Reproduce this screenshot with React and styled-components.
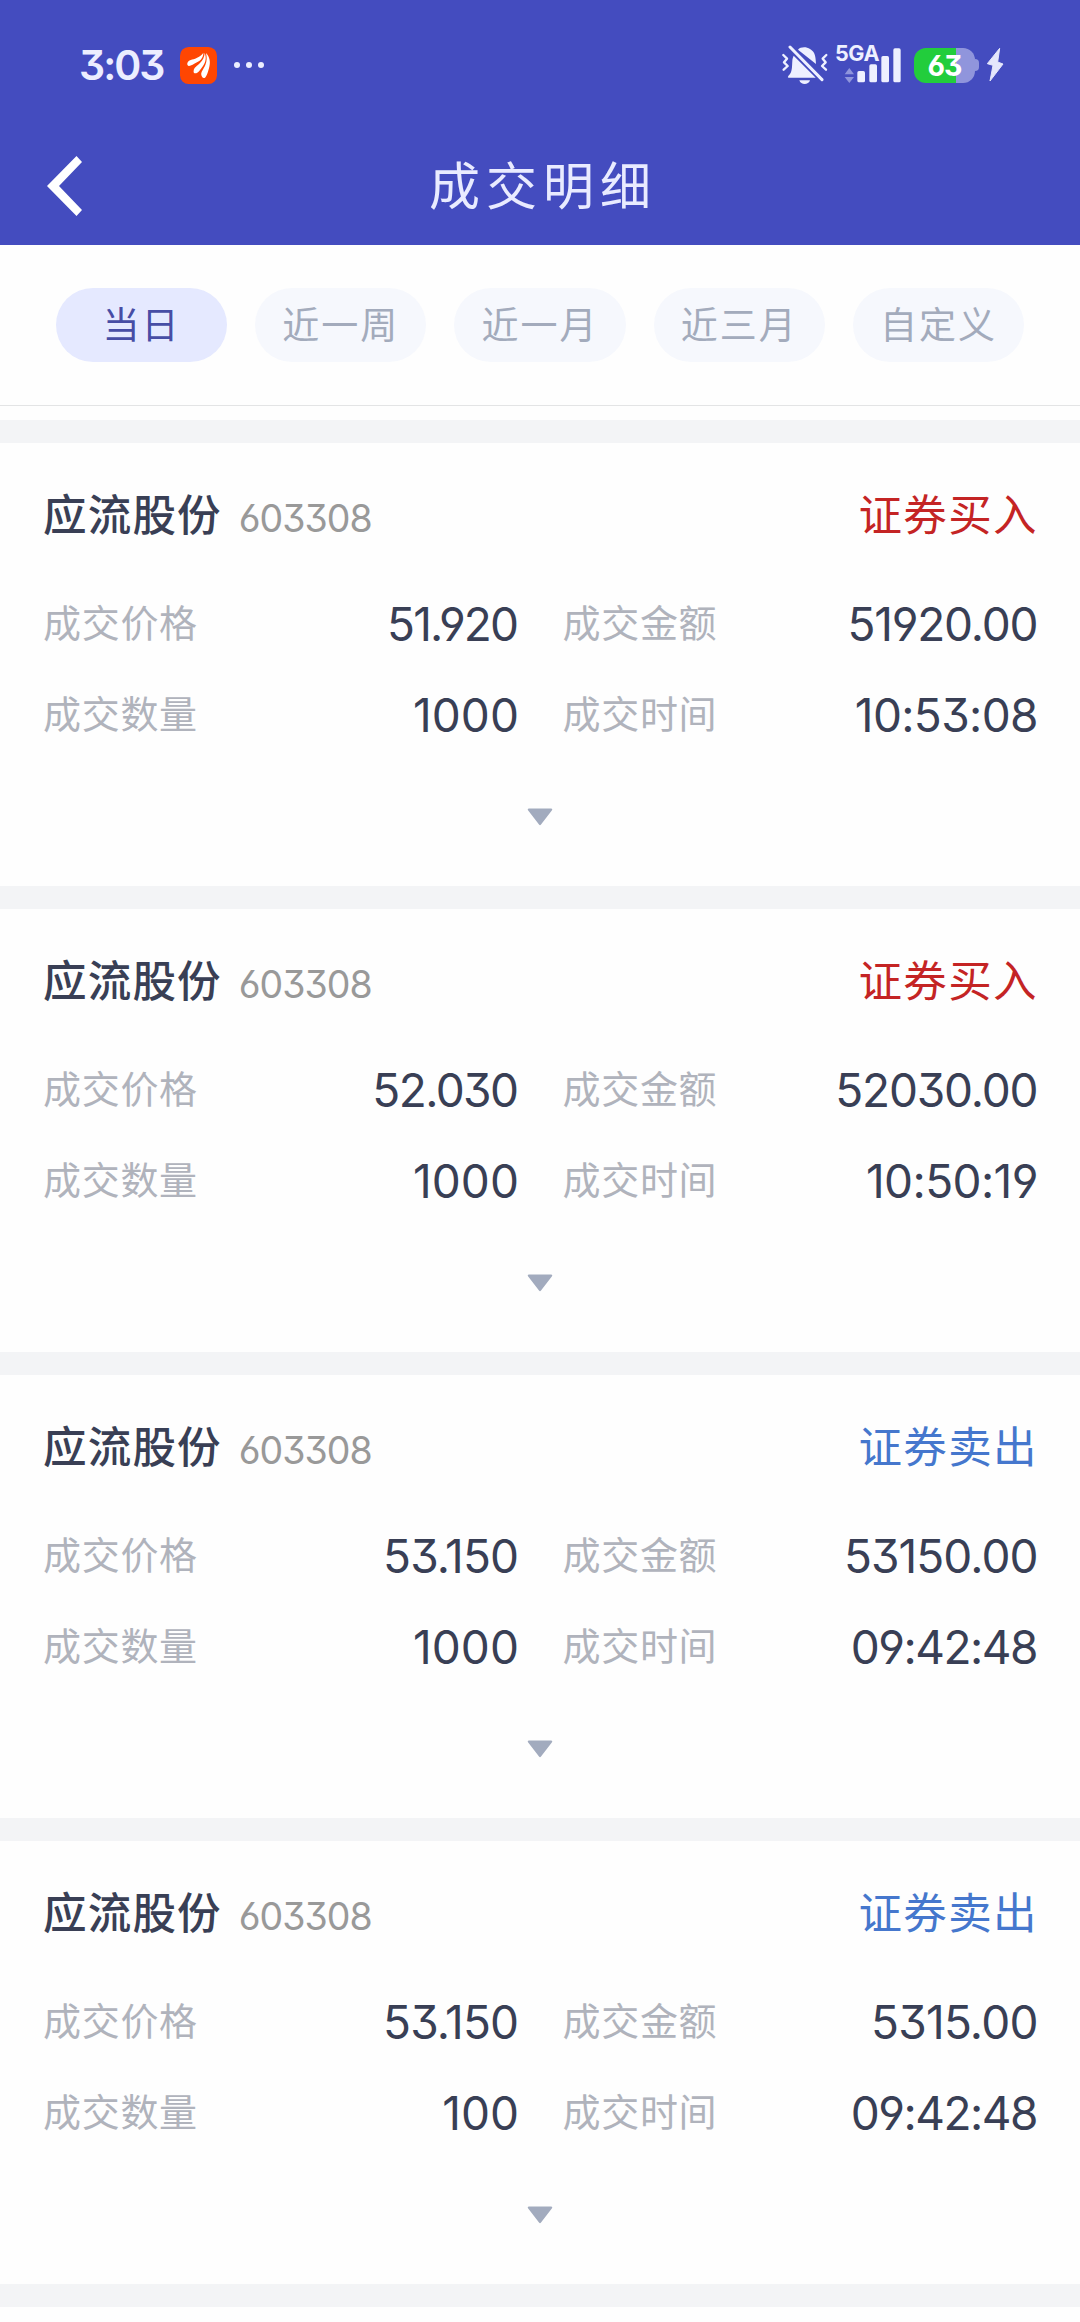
import styled, { createGlobalStyle } from "styled-components";
import { useState } from "react";

const filtros = ["当日", "近一周", "近一月", "近三月", "自定义"];

const operaciones = [
  { id: 1, tipo: "buy", precio: "51.920", importe: "51920.00", cantidad: "1000", hora: "10:53:08" },
  { id: 2, tipo: "buy", precio: "52.030", importe: "52030.00", cantidad: "1000", hora: "10:50:19" },
  { id: 3, tipo: "sell", precio: "53.150", importe: "53150.00", cantidad: "1000", hora: "09:42:48" },
  { id: 4, tipo: "sell", precio: "53.150", importe: "5315.00", cantidad: "100", hora: "09:42:48" },
];

const espaciado = {
  "51.920": -1.9,
  "52.030": -1.6,
  "53.150": -0.9,
  "51920.00": -1.2,
  "52030.00": -1.2,
  "53150.00": -0.95,
  "5315.00": -0.75,
  "1000": 0.1,
  "100": 0,
  "10:53:08": -0.65,
  "10:50:19": -0.6,
};

function AppLogo() {
  return (
    <svg width="37" height="37" viewBox="0 0 111 111">
      <rect width="111" height="111" rx="26" fill="#ff4602" />
      <g fill="#fff">
        <path d="M22 49C24 38 38 39 50 33C61 28 66 23 70 17C70 31 63 40 51 46C41 51 34 57 27 57C23 57 21 53 22 49Z" />
        <path d="M41 71C42 62 52 56 60 48C69 39 73 30 74 18C80 32 77 46 69 57C62 67 54 79 46 79C42 79 40 76 41 71Z" />
        <path d="M64 84C62 75 71 66 76 54C81 42 81 31 78 18C89 30 92 44 88 59C85 72 79 92 73 93C68 94 65 89 64 84Z" />
      </g>
    </svg>
  );
}

function MutedBell() {
  return (
    <svg width="46" height="40" viewBox="35 41 138 120">
      <g fill="#eef0ff">
        <path d="M83 55C90 47 107 45 119 53C131 60 135 70 136 85L137 98Z" />
        <path d="M70 73L136 139H55C50 139 54 133 59 128C66 119 65 101 66 89C66 83 68 78 70 73Z" />
        <path d="M87 147H119C115 162 91 162 87 147Z" />
      </g>
      <g fill="none" stroke="#eef0ff" strokeLinecap="round" strokeLinejoin="round">
        <path d="M59 47L155 145" strokeWidth="9" />
        <path d="M39 71L50 82L41 93L52 104L40 115" strokeWidth="7" />
        <path d="M168 71L157 82L166 93L155 104L167 115" strokeWidth="7" />
      </g>
    </svg>
  );
}

function SignalBars() {
  return (
    <svg width="57" height="35" viewBox="220 53 171 105">
      <g fill="#8f95dc">
        <path d="M236 113L250 132H222Z" />
        <path d="M222 140H250L236 158Z" />
      </g>
      <g fill="#eef0ff">
        <rect x="260" y="122" width="23" height="34" rx="5" />
        <rect x="296" y="102" width="23" height="54" rx="5" />
        <rect x="332" y="77" width="23" height="79" rx="5" />
        <rect x="368" y="54" width="22" height="102" rx="5" />
      </g>
    </svg>
  );
}

function Bolt() {
  return (
    <svg width="17" height="34" viewBox="650 57 51 102">
      <path d="M688 58L651 104L668 109L659 156L698 105L682 99Z" fill="#e4e6fb" stroke="#e4e6fb" strokeWidth="3" strokeLinejoin="round" />
    </svg>
  );
}

function Campo({ label, value }) {
  return (
    <Field>
      <Label>{label}</Label>
      <Value $espacio={espaciado[value] ?? -1.5}>{value}</Value>
    </Field>
  );
}

function Operacion({ data }) {
  return (
    <Card>
      <CardHead>
        <Name>应流股份</Name>
        <Code>603308</Code>
        <Side $tipo={data.tipo}>{data.tipo === "buy" ? "证券买入" : "证券卖出"}</Side>
      </CardHead>
      <Fields>
        <Campo label="成交价格" value={data.precio} />
        <Campo label="成交金额" value={data.importe} />
        <Campo label="成交数量" value={data.cantidad} />
        <Campo label="成交时间" value={data.hora} />
      </Fields>
      <Expand>
        <svg width="26" height="18" viewBox="0 0 26 18">
          <path d="M2 0.5H24Q26 0.5 24.8 2.5L14 16.5Q13 17.8 12 16.5L1.2 2.5Q0 0.5 2 0.5Z" fill="#a2abbe" />
        </svg>
      </Expand>
    </Card>
  );
}

export default function App() {
  const [filtro, setFiltro] = useState("当日");

  return (
    <Container>
      <GlobalStyle />
      <Header>
        <StatusBar>
          <Clock>3:03</Clock>
          <AppLogo />
          <Dots>
            <i />
            <i />
            <i />
          </Dots>
          <StatusIcons>
            <MutedBell />
            <Signal>
              <Network>5GA</Network>
              <SignalBars />
            </Signal>
            <Battery>
              <BatteryBody>63</BatteryBody>
              <BatteryTip />
            </Battery>
            <Bolt />
          </StatusIcons>
        </StatusBar>
        <NavBar>
          <BackButton>
            <svg width="36" height="60" viewBox="0 0 36 60">
              <path d="M29.5 0L35 6L12 30L35 54L29.5 60L0 30Z" fill="#fff" />
            </svg>
          </BackButton>
          <Title>成交明细</Title>
        </NavBar>
      </Header>
      <Tabs>
        {filtros.map((item) => (
          <Tab key={item} $activo={item === filtro} onClick={() => setFiltro(item)}>
            {item}
          </Tab>
        ))}
      </Tabs>
      <List>
        {operaciones.map((item) => (
          <Operacion key={item.id} data={item} />
        ))}
      </List>
    </Container>
  );
}

const GlobalStyle = createGlobalStyle`
  * {
    box-sizing: border-box;
  }
  body {
    margin: 0;
    background: #fefefe;
    font-family: Inter, "Noto Sans CJK SC", sans-serif;
    /* open six and nine, flat-top three */
    font-feature-settings: "cv03", "cv04", "cv09";
  }
  svg {
    display: block;
    flex: none;
  }
`;
const Container = styled.div`
  width: 1080px;
  height: 2322px;
  overflow: hidden;
  background: #fefefe;
`;
const Header = styled.header`
  height: 245px;
  background: #444cbf;
`;
const StatusBar = styled.div`
  height: 130px;
  padding: 0 76px 0 79px;
  display: flex;
  align-items: center;
`;
const Clock = styled.span`
  width: 101px;
  font-size: 41px;
  font-weight: 600;
  line-height: 50px;
  letter-spacing: -2px;
  color: #eceeff;
`;
const Dots = styled.div`
  display: flex;
  gap: 6px;
  margin-left: 17px;

  i {
    width: 6px;
    height: 6px;
    border-radius: 50%;
    background: #eceeff;
  }
`;
const StatusIcons = styled.div`
  display: flex;
  align-items: center;
  margin-left: auto;
  gap: 7px;
`;
const Signal = styled.div`
  position: relative;
  width: 66px;
  display: flex;
  justify-content: flex-end;
`;
const Network = styled.span`
  position: absolute;
  left: 0;
  top: -7px;
  font-size: 21.5px;
  font-weight: 700;
  line-height: 24px;
  letter-spacing: -0.4px;
  color: #eef0ff;
`;
const Battery = styled.div`
  display: flex;
  align-items: center;
  margin-left: 6px;
  margin-right: 1px;
`;
const BatteryBody = styled.div`
  width: 61px;
  height: 35px;
  border-radius: 12px;
  background: linear-gradient(90deg, #22cd3c 42px, #9095dc 42px);
  color: #fff;
  font-size: 28.5px;
  font-weight: 700;
  line-height: 35px;
  letter-spacing: -1px;
  text-align: center;
`;
const BatteryTip = styled.div`
  width: 4px;
  height: 12px;
  border-radius: 0 4px 4px 0;
  background: #9095dc;
`;
const NavBar = styled.div`
  height: 112px;
  padding: 0 47px;
  display: grid;
  grid-template-columns: 36px 1fr 36px;
  align-items: center;
`;
const BackButton = styled.button`
  padding: 0;
  border: 0;
  background: none;
`;
const Title = styled.h1`
  margin: 0;
  padding: 1px 0 0 6px;
  font-size: 51px;
  font-weight: 400;
  line-height: 76px;
  letter-spacing: 6px;
  text-align: center;
  color: #e9ebff;
`;
const Tabs = styled.nav`
  height: 161px;
  padding: 43px 56px 0;
  display: grid;
  grid-template-columns: repeat(5, 1fr);
  gap: 28px;
  border-bottom: 1px solid #e3e4e5;
`;
const Tab = styled.button`
  height: 74px;
  padding: 2px 0 0;
  border: 0;
  border-radius: 37px;
  font-family: inherit;
  font-size: 37px;
  line-height: 72px;
  letter-spacing: 2px;
  white-space: nowrap;
  background: ${({ $activo }) => ($activo ? "#e5e9ff" : "#f6f8fd")};
  color: ${({ $activo }) => ($activo ? "#474da5" : "#a3abbc")};
`;
const List = styled.main`
  margin-top: 14px;
  border-bottom: 23px solid #f3f4f6;
`;
const Card = styled.section`
  height: 466px;
  padding: 9px 43px 0;
  border-top: 23px solid #f3f4f6;
`;
const CardHead = styled.div`
  height: 126px;
  display: flex;
  align-items: center;
`;
const Name = styled.span`
  margin-bottom: 6px;
  font-size: 43.5px;
  font-weight: 500;
  letter-spacing: 1.2px;
  color: #393f55;
`;
const Code = styled.span`
  margin: 6px 0 0 17px;
  font-size: 37.5px;
  letter-spacing: -1px;
  color: #999;
`;
const Side = styled.span`
  margin: 0 -1px 6px auto;
  font-size: 43.5px;
  letter-spacing: 1.4px;
  color: ${({ $tipo }) => ($tipo === "buy" ? "#c42424" : "#4577cd")};
`;
const Fields = styled.div`
  display: grid;
  grid-template-columns: 1fr 1fr;
  column-gap: 45px;
`;
const Field = styled.div`
  height: 91px;
  display: flex;
  align-items: center;
  justify-content: space-between;
`;
const Label = styled.span`
  margin-bottom: 6px;
  font-size: 38px;
  letter-spacing: 0.7px;
  color: #b0b3bc;
`;
const Value = styled.span`
  margin-right: ${({ $espacio }) => -($espacio + 1.5)}px;
  font-size: 46px;
  letter-spacing: ${({ $espacio }) => $espacio}px;
  color: #393f55;
`;
const Expand = styled.div`
  height: 114px;
  display: flex;
  align-items: center;
  justify-content: center;
`;
